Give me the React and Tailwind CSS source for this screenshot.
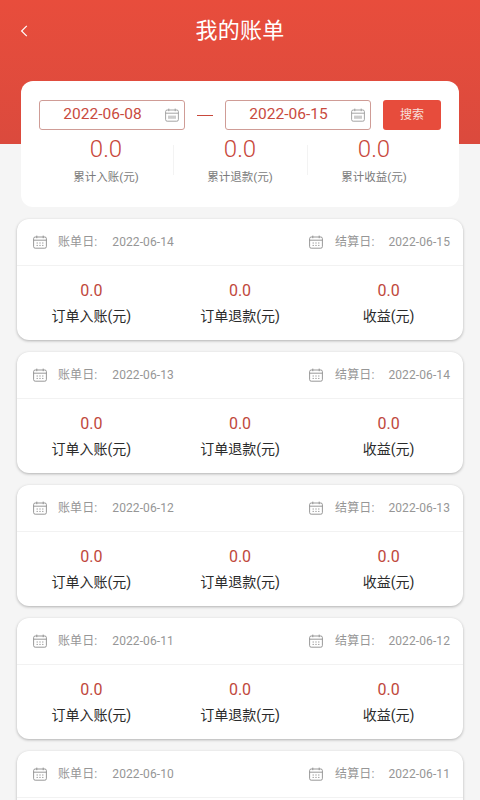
import React from 'react'

const BILLS = [
  { bill: '2022-06-14', settle: '2022-06-15' },
  { bill: '2022-06-13', settle: '2022-06-14' },
  { bill: '2022-06-12', settle: '2022-06-13' },
  { bill: '2022-06-11', settle: '2022-06-12' },
]

function CalendarIcon({ className, dots }) {
  return (
    <svg viewBox="0 0 14 14" fill="none" stroke="currentColor" strokeWidth="0.9" className={className}>
      <rect x="0.6" y="2" width="12.8" height="11.2" rx="1.6" />
      <path d="M0.6 5.2H13.4M3.8 0.6V3.2M10.2 0.6V3.2" />
      {dots ? (
        <path d="M3.6 8h1.2M6.4 8h1.2M9.2 8h1.2M3.6 10.4h1.2M6.4 10.4h1.2M9.2 10.4h1.2" strokeWidth="1" />
      ) : (
        <path d="M4 7.6v3.2M6 7.6v3.2M8 7.6v3.2M10 7.6v3.2" strokeWidth="1" />
      )}
    </svg>
  )
}

function DateInput({ value }) {
  return (
    <div className="w-[146px] h-[30px] flex items-center border border-[#cf9c96] rounded-[3px] pr-[5px]">
      <span className="flex-1 text-center text-[15.5px] text-[#c94a3e]">{value}</span>
      <CalendarIcon className="w-[14px] h-[14px] text-[#9a9a9a]" />
    </div>
  )
}

function Total({ label, divider }) {
  return (
    <div className="relative w-[134px] flex flex-col items-center">
      {divider && <div className="absolute left-0 top-[10px] w-px h-[30px] bg-[#f3f3f3]" />}
      <span className="text-[24px] leading-[28px] font-light text-[#c8483b]">0.0</span>
      <span className="mt-[5px] text-[11.5px] leading-[18px] text-[#7b7b7b]">{label}</span>
    </div>
  )
}

function CardHeader({ bill, settle }) {
  return (
    <div className="h-[47px] pl-[16px] pr-[13px] flex items-center justify-between border-b border-[#f2f2f2] text-[12px] tracking-[0.1px] text-[#969696]">
      <div className="flex items-center">
        <CalendarIcon dots className="w-[14px] h-[14px] text-[#8d8d8d]" />
        <span className="ml-[11px]">账单日:</span>
        <span className="ml-[15px]">{bill}</span>
      </div>
      <div className="flex items-center">
        <CalendarIcon dots className="w-[14px] h-[14px] text-[#8d8d8d]" />
        <span className="ml-[12px]">结算日:</span>
        <span className="ml-[14px]">{settle}</span>
      </div>
    </div>
  )
}

function BillCard({ bill, settle }) {
  return (
    <div className="h-[121px] mb-[12px] bg-white rounded-[12px] shadow-[0_1px_3px_rgba(0,0,0,0.28)] overflow-hidden shrink-0">
      <CardHeader bill={bill} settle={settle} />
      <div className="grid grid-cols-3 pt-[14px] text-center">
        {['订单入账(元)', '订单退款(元)', '收益(元)'].map((label) => (
          <div key={label} className="flex flex-col items-center">
            <span className="text-[16px] leading-[22px] text-[#c0483c]">0.0</span>
            <span className="mt-[3px] text-[14px] leading-[22px] text-[#2b2b2b]">{label}</span>
          </div>
        ))}
      </div>
    </div>
  )
}

export default function App() {
  return (
    <div className="w-[480px] h-[800px] overflow-hidden bg-[#f5f5f5] font-['Roboto','Noto_Sans_CJK_SC',sans-serif]">
      <div className="h-[144px] bg-gradient-to-b from-[#e84d3c] to-[#db4a3d]">
        <div className="relative pt-[10px] flex items-center justify-center">
          <svg viewBox="0 0 10 16" fill="none" stroke="white" strokeWidth="1.5" className="absolute left-[20px] top-[24px] w-[8px] h-[14px]">
            <path d="M8.5 1.5L2 8l6.5 6.5" />
          </svg>
          <h1 className="text-[22px] leading-[42px] text-white font-normal tracking-[0.25px]">我的账单</h1>
        </div>
      </div>

      <div className="relative mt-[-63px] mx-[21px] h-[126px] bg-white rounded-[12px] px-[18px] pt-[19px]">
        <div className="flex items-center">
          <DateInput value="2022-06-08" />
          <div className="w-[16px] h-px bg-[#c8493c] mx-[12px]" />
          <DateInput value="2022-06-15" />
          <button className="ml-[12px] w-[58px] h-[30px] bg-[#e74c3c] rounded-[3px] text-[12px] text-[#f8e0dc]">搜索</button>
        </div>
        <div className="flex justify-center mt-[5px]">
          <Total label="累计入账(元)" />
          <Total label="累计退款(元)" divider />
          <Total label="累计收益(元)" divider />
        </div>
      </div>

      <div className="mt-[12px] mx-[17px] flex flex-col">
        {BILLS.map((b) => (
          <BillCard key={b.bill} bill={b.bill} settle={b.settle} />
        ))}
        {/* the next card only shows its header above the fold */}
        <div className="h-[60px] bg-white rounded-t-[12px] shadow-[0_1px_3px_rgba(0,0,0,0.28)] shrink-0">
          <CardHeader bill="2022-06-10" settle="2022-06-11" />
        </div>
      </div>
    </div>
  )
}
